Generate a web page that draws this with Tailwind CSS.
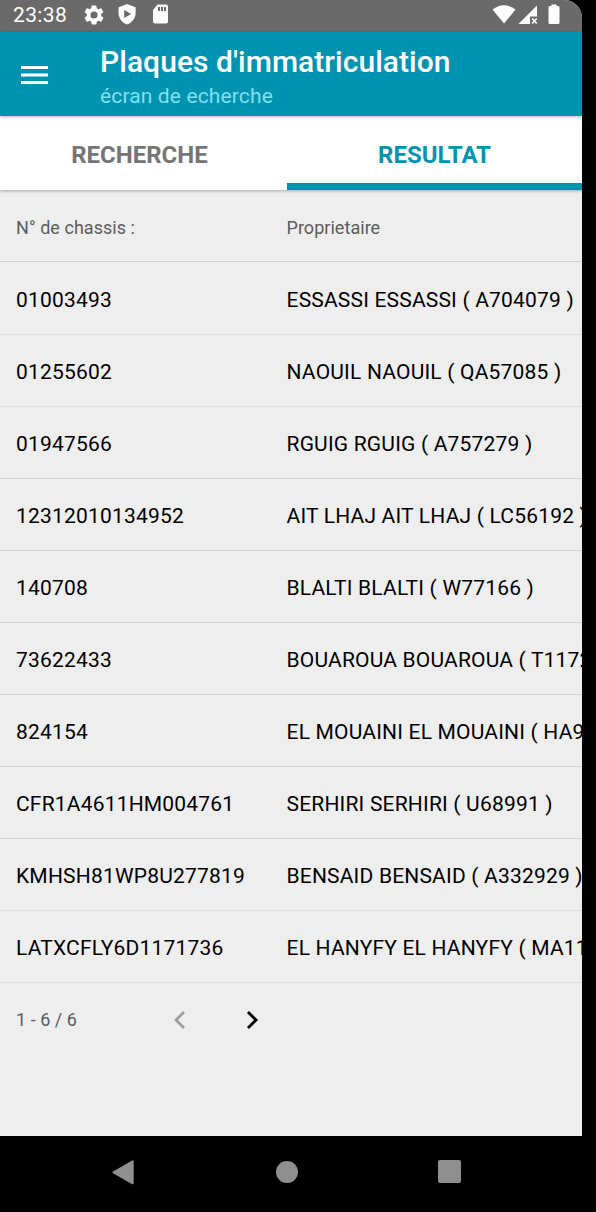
<!DOCTYPE html>
<html lang="fr">
<head>
<meta charset="utf-8">
<title>Plaques d'immatriculation</title>
<script src="https://cdn.jsdelivr.net/npm/@tailwindcss/browser@4"></script>
</head>
<body class="bg-black font-['Roboto',sans-serif]">
<div class="flex h-[1212px] w-[596px] flex-col overflow-hidden bg-black">
  <div class="flex h-[1136px] w-[582px] flex-col overflow-hidden rounded-tr-[18px] bg-[#eeeeee]">
    <div class="flex h-8 shrink-0 items-center bg-[#6a6a6a] pl-[13px] pr-[20px] text-white">
      <span class="w-[69px] whitespace-nowrap pb-[2px] text-[21px] leading-7 tracking-[0.35px]">23:38</span>
      <svg class="mb-[3px] size-[24px]" viewBox="0 0 24 24" fill="currentColor"><path d="M19.14 12.94c.04-.3.06-.61.06-.94 0-.32-.02-.64-.07-.94l2.03-1.58a.49.49 0 0 0 .12-.61l-1.92-3.32a.488.488 0 0 0-.59-.22l-2.39.96c-.5-.38-1.03-.7-1.62-.94l-.36-2.54a.484.484 0 0 0-.48-.41h-3.84c-.24 0-.43.17-.47.41l-.36 2.54c-.59.24-1.13.57-1.62.94l-2.39-.96c-.22-.08-.47 0-.59.22L2.74 8.87c-.12.21-.08.47.12.61l2.03 1.58c-.05.3-.09.63-.09.94s.02.64.07.94l-2.03 1.58a.49.49 0 0 0-.12.61l1.92 3.32c.12.22.37.29.59.22l2.39-.96c.5.38 1.03.7 1.62.94l.36 2.54c.05.24.24.41.48.41h3.84c.24 0 .44-.17.47-.41l.36-2.54c.59-.24 1.13-.56 1.62-.94l2.39.96c.22.08.47 0 .59-.22l1.92-3.32c.12-.22.07-.47-.12-.61l-2.01-1.58zM12 15.6A3.6 3.6 0 1 1 12 8.4a3.6 3.6 0 0 1 0 7.2z"/></svg>
      <svg class="mb-[4px] ml-[10px] size-[22px]" viewBox="0 0 22 22" fill="currentColor" fill-rule="evenodd"><path d="M11 1 19.6 4.2V10C19.6 15.300 16 19.800 11 21.400C6 19.800 2.600 15.300 2.600 10V4.200ZM8.200 7V15L15.200 11Z"/></svg>
      <svg class="mb-[4px] ml-[10px] size-[24px]" viewBox="0 0 24 24" fill="currentColor" fill-rule="evenodd"><path d="M9.500 2.500H18Q20 2.500 20 4.500V19.500Q20 21.500 18 21.500H7Q5 21.500 5 19.500V8ZM10 5V9H12V5ZM13 5V9H15V5ZM16 5V9H18V5Z"/></svg>
      <svg class="mb-[4px] ml-auto h-[20px] w-[70px]" viewBox="0 0 70 20" fill="currentColor"><path d="M0.500 5.500Q12 -3 23.500 5.500L12 19.500Z"/><path d="M26.500 20 45 1.500V12.500H38V20Z"/><path d="m40.200 14.500 4.500 5m0-5-4.500 5" stroke="currentColor" stroke-width="1.600"/><path d="M59.500 0.500H64.500V2H66Q67.500 2 67.500 3.500V18.500Q67.500 20 66 20H58Q56.500 20 56.500 18.500V3.500Q56.500 2 58 2H59.500Z"/></svg>
    </div>
    <header class="z-10 flex h-[84px] shrink-0 bg-[#0093af] pl-[21px] shadow-[0_1px_3px_rgba(0,0,0,0.3)]">
      <svg class="mt-[34px] h-[18px] w-[27px]" viewBox="0 0 27 18" fill="#fff"><path d="M0 0H27V3H0ZM0 7.500H27V10.500H0ZM0 15H27V18H0Z"/></svg>
      <div class="flex flex-col whitespace-nowrap pl-[52px] pt-[12px]">
        <h1 class="text-[30px] font-medium leading-[36px] tracking-[0.05px] text-white">Plaques d'immatriculation</h1>
        <p class="text-[21px] leading-[32px] tracking-[0.13px] text-[#7fe1f1]">écran de echerche</p>
      </div>
    </header>
    <nav class="z-[5] flex h-[74px] shrink-0 bg-white text-center text-[24px] font-bold leading-[78px] shadow-[0_1px_3px_rgba(0,0,0,0.3)]">
      <div class="w-[287px] text-[#757575]"><span class="mr-[8px]">RECHERCHE</span></div>
      <div class="w-[295px] border-b-[7px] border-[#0093af] text-[#0093af]">RESULTAT</div>
    </nav>
    <main class="flex flex-col whitespace-nowrap text-[21px] leading-[24px] tracking-[0.19px] text-black">
      <div class="flex h-[72px] items-center border-b border-[#cfcfcf] pl-4 pt-[4px] text-[18px] tracking-[0.04px] text-[#5c5c5c]"><span class="w-[270.5px] shrink-0">N° de chassis :</span><span>Proprietaire</span></div>
      <div class="flex h-[73px] items-center border-b border-[#dddddd] pl-4 pt-[3px]"><span class="w-[270.5px] shrink-0">01003493</span><span>ESSASSI ESSASSI ( A704079 )</span></div>
      <div class="flex h-[72px] items-center border-b border-[#dddddd] pl-4 pt-[2px]"><span class="w-[270.5px] shrink-0">01255602</span><span>NAOUIL NAOUIL ( QA57085 )</span></div>
      <div class="flex h-[72px] items-center border-b border-[#cfcfcf] pl-4 pt-[2px]"><span class="w-[270.5px] shrink-0">01947566</span><span>RGUIG RGUIG ( A757279 )</span></div>
      <div class="flex h-[72px] items-center border-b border-[#cfcfcf] pl-4 pt-[2px]"><span class="w-[270.5px] shrink-0">12312010134952</span><span>AIT LHAJ AIT LHAJ ( LC56192 )</span></div>
      <div class="flex h-[72px] items-center border-b border-[#cfcfcf] pl-4 pt-[2px]"><span class="w-[270.5px] shrink-0">140708</span><span>BLALTI BLALTI ( W77166 )</span></div>
      <div class="flex h-[72px] items-center border-b border-[#cfcfcf] pl-4 pt-[2px]"><span class="w-[270.5px] shrink-0">73622433</span><span>BOUAROUA BOUAROUA ( T1172</span></div>
      <div class="flex h-[72px] items-center border-b border-[#cfcfcf] pl-4 pt-[2px]"><span class="w-[270.5px] shrink-0">824154</span><span>EL MOUAINI EL MOUAINI ( HA9</span></div>
      <div class="flex h-[72px] items-center border-b border-[#cfcfcf] pl-4 pt-[2px]"><span class="w-[270.5px] shrink-0">CFR1A4611HM004761</span><span>SERHIRI SERHIRI ( U68991 )</span></div>
      <div class="flex h-[72px] items-center border-b border-[#dddddd] pl-4 pt-[2px]"><span class="w-[270.5px] shrink-0">KMHSH81WP8U277819</span><span>BENSAID BENSAID ( A332929 )</span></div>
      <div class="flex h-[72px] items-center border-b border-[#dddddd] pl-4 pt-[2px]"><span class="w-[270.5px] shrink-0">LATXCFLY6D1171736</span><span>EL HANYFY EL HANYFY ( MA11</span></div>
      <div class="flex h-[72px] items-center pl-4 pt-[2px]">
        <span class="w-[156px] text-[18px] tracking-[0.04px] text-[#5c5c5c]">1 - 6 / 6</span>
        <svg class="h-[20px] w-[15px]" viewBox="0 0 15 20" fill="none" stroke="#9b9b9b" stroke-width="2.700"><path d="M12 2 4 10 12 18"/></svg>
        <svg class="ml-[58px] h-[20px] w-[15px]" viewBox="0 0 15 20" fill="none" stroke="#000" stroke-width="2.900"><path d="M3 2 11 10 3 18"/></svg>
      </div>
    </main>
  </div>
  <nav class="flex h-[74px] items-center pl-[112px]">
    <svg class="h-[26px] w-[22px]" viewBox="0 0 22 26" fill="#8f8f8f" stroke="#8f8f8f" stroke-width="2" stroke-linejoin="round"><path d="M1.500 12.300 20.700 1.300V23.300Z"/></svg>
    <div class="mb-[2px] ml-[142px] size-[22px] rounded-full bg-[#8f8f8f]"></div>
    <div class="mb-[3px] ml-[140px] size-[23px] rounded-[2px] bg-[#8f8f8f]"></div>
  </nav>
</div>
</body>
</html>
